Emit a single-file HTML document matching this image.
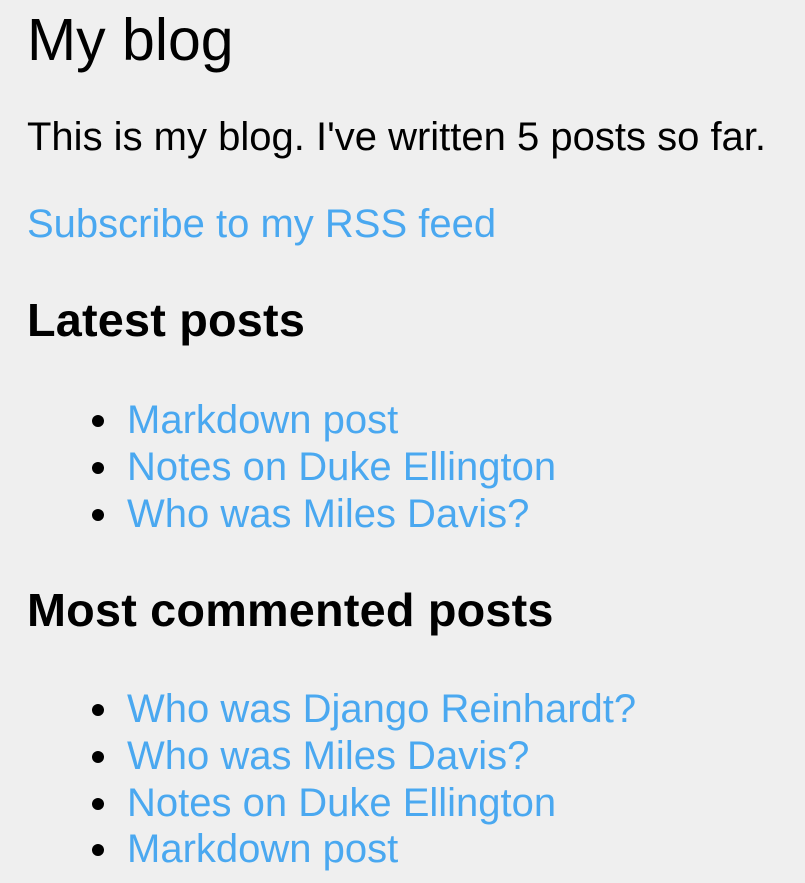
<!DOCTYPE html>
<html><head><meta charset="utf-8"><style>
html,body{margin:0;padding:0;background:#efefef;width:805px;height:883px;overflow:hidden}
body{font-family:"Liberation Sans",Arial,sans-serif;color:#000;position:relative}
.a{position:absolute;left:27px;white-space:nowrap;margin:0}
a{color:#4aa8f0;text-decoration:none}
.li{position:absolute;left:127px;font-size:40px;line-height:46px;white-space:nowrap}
.li:before{content:"";position:absolute;left:-35px;top:18px;width:12px;height:12px;border-radius:50%;background:#000}
</style></head><body>
<div class="a" style="top:6px;font-size:59px;line-height:68px">My blog</div>
<div class="a" style="top:114px;font-size:40px;line-height:46px">This is my blog. I've written 5 posts so far.</div>
<div class="a" style="top:201px;font-size:40px;line-height:46px"><a>Subscribe to my RSS feed</a></div>
<div class="a" style="top:294px;font-size:46.8px;line-height:53px;font-weight:bold;letter-spacing:0.2px">Latest posts</div>
<div class="li" style="top:397px"><a>Markdown post</a></div>
<div class="li" style="top:444px"><a>Notes on Duke Ellington</a></div>
<div class="li" style="top:491px"><a>Who was Miles Davis?</a></div>
<div class="a" style="top:584px;font-size:46.8px;line-height:53px;font-weight:bold;letter-spacing:0.2px">Most commented posts</div>
<div class="li" style="top:686px"><a>Who was Django Reinhardt?</a></div>
<div class="li" style="top:733px"><a>Who was Miles Davis?</a></div>
<div class="li" style="top:780px"><a>Notes on Duke Ellington</a></div>
<div class="li" style="top:826px"><a>Markdown post</a></div>
</body></html>
